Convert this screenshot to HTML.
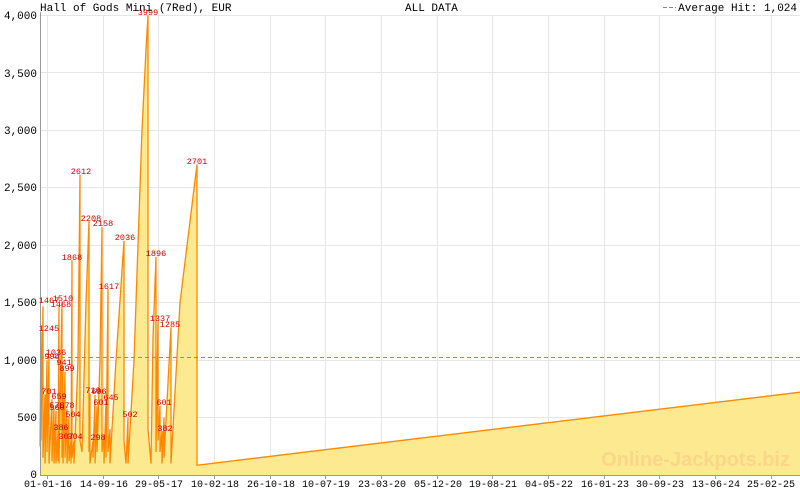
<!DOCTYPE html>
<html><head><meta charset="utf-8"><style>
html,body{margin:0;padding:0;background:#fff;width:800px;height:490px;overflow:hidden}
svg{display:block;font-family:"Liberation Mono",monospace}
</style></head><body>
<svg width="800" height="490" viewBox="0 0 800 490">
<rect width="800" height="490" fill="#fff"/>
<g stroke="#e6e6e6" stroke-width="1">
<line x1="40" y1="15.5" x2="800" y2="15.5"/><line x1="40" y1="72.5" x2="800" y2="72.5"/>
<line x1="40" y1="130.5" x2="800" y2="130.5"/><line x1="40" y1="187.5" x2="800" y2="187.5"/>
<line x1="40" y1="245.5" x2="800" y2="245.5"/><line x1="40" y1="302.5" x2="800" y2="302.5"/>
<line x1="40" y1="360.5" x2="800" y2="360.5"/><line x1="40" y1="417.5" x2="800" y2="417.5"/>
<line x1="47.5" y1="15" x2="47.5" y2="475"/><line x1="103.5" y1="15" x2="103.5" y2="475"/>
<line x1="158.5" y1="15" x2="158.5" y2="475"/><line x1="214.5" y1="15" x2="214.5" y2="475"/>
<line x1="270.5" y1="15" x2="270.5" y2="475"/><line x1="325.5" y1="15" x2="325.5" y2="475"/>
<line x1="381.5" y1="15" x2="381.5" y2="475"/><line x1="437.5" y1="15" x2="437.5" y2="475"/>
<line x1="492.5" y1="15" x2="492.5" y2="475"/><line x1="548.5" y1="15" x2="548.5" y2="475"/>
<line x1="604.5" y1="15" x2="604.5" y2="475"/><line x1="659.5" y1="15" x2="659.5" y2="475"/>
<line x1="715.5" y1="15" x2="715.5" y2="475"/><line x1="771.5" y1="15" x2="771.5" y2="475"/>
</g>
<g transform="translate(0,475) scale(1,-0.115)">
<polygon fill="#fde98f" points="40,0 40,250 41,1245 41,300 43,1467 43,150 45,701 45,100 47,998 47,200 49,1036 49,100 52,659 52,120 54,578 54,100 56,560 56,100 58,386 58,120 59,1468 59,100 62,1510 62,150 63,941 63,100 65,899 65,150 67,578 67,100 69,504 69,120 71,304 71,100 72,1868 72,150 74,300 74,100 78,1000 80,2612 80,300 82,200 86,1500 89,2208 89,200 90,710 90,100 93,298 93,150 95,696 95,100 97,601 97,200 100,1000 102,2158 102,200 104,350 104,100 106,645 106,150 108,1617 108,200 110,400 110,100 116,1000 124,2036 124,300 126,100 128,502 128,100 134,1000 138,2000 142,3000 146,3700 148,3999 148,400 151,100 153,1200 156,1896 156,200 158,1337 158,300 160,601 160,200 162,382 162,100 164,500 164,150 168,800 171,1285 171,100 180,1500 197,2701 197,85 800,720 800,0"/>
<polyline fill="none" stroke="#ff8800" stroke-width="1.3" vector-effect="non-scaling-stroke" points="40,250 41,1245 41,300 43,1467 43,150 45,701 45,100 47,998 47,200 49,1036 49,100 52,659 52,120 54,578 54,100 56,560 56,100 58,386 58,120 59,1468 59,100 62,1510 62,150 63,941 63,100 65,899 65,150 67,578 67,100 69,504 69,120 71,304 71,100 72,1868 72,150 74,300 74,100 78,1000 80,2612 80,300 82,200 86,1500 89,2208 89,200 90,710 90,100 93,298 93,150 95,696 95,100 97,601 97,200 100,1000 102,2158 102,200 104,350 104,100 106,645 106,150 108,1617 108,200 110,400 110,100 116,1000 124,2036 124,300 126,100 128,502 128,100 134,1000 138,2000 142,3000 146,3700 148,3999 148,400 151,100 153,1200 156,1896 156,200 158,1337 158,300 160,601 160,200 162,382 162,100 164,500 164,150 168,800 171,1285 171,100 180,1500 197,2701 197,85 800,720"/>
</g>
<line x1="40" y1="357.5" x2="800" y2="357.5" stroke="#5a9cc8" stroke-dasharray="4,3" stroke-width="1"/>
<text x="790" y="466" text-anchor="end" font-family="Liberation Sans,sans-serif" font-weight="bold" font-size="20" fill="#fad689">Online-Jackpots.biz</text>
<line x1="40.5" y1="12" x2="40.5" y2="476" stroke="#999"/>
<line x1="40" y1="475.5" x2="800" y2="475.5" stroke="#999"/>
<g stroke="#999"><line x1="47.5" y1="475" x2="47.5" y2="479"/><line x1="103.5" y1="475" x2="103.5" y2="479"/><line x1="158.5" y1="475" x2="158.5" y2="479"/><line x1="214.5" y1="475" x2="214.5" y2="479"/><line x1="270.5" y1="475" x2="270.5" y2="479"/><line x1="325.5" y1="475" x2="325.5" y2="479"/><line x1="381.5" y1="475" x2="381.5" y2="479"/><line x1="437.5" y1="475" x2="437.5" y2="479"/><line x1="492.5" y1="475" x2="492.5" y2="479"/><line x1="548.5" y1="475" x2="548.5" y2="479"/><line x1="604.5" y1="475" x2="604.5" y2="479"/><line x1="659.5" y1="475" x2="659.5" y2="479"/><line x1="715.5" y1="475" x2="715.5" y2="479"/><line x1="771.5" y1="475" x2="771.5" y2="479"/></g>
<g font-size="11" fill="#000" text-anchor="end">
<text x="37" y="19">4,000</text><text x="37" y="77">3,500</text><text x="37" y="134">3,000</text><text x="37" y="191">2,500</text><text x="37" y="249">2,000</text><text x="37" y="306">1,500</text><text x="37" y="364">1,000</text><text x="37" y="421">500</text><text x="37" y="478">0</text>
</g>
<g font-size="10" fill="#000" text-anchor="middle">
<text x="48" y="487">01-01-16</text><text x="104" y="487">14-09-16</text><text x="159" y="487">29-05-17</text><text x="215" y="487">10-02-18</text><text x="271" y="487">26-10-18</text><text x="326" y="487">10-07-19</text><text x="382" y="487">23-03-20</text><text x="438" y="487">05-12-20</text><text x="493" y="487">19-08-21</text><text x="549" y="487">04-05-22</text><text x="605" y="487">16-01-23</text><text x="660" y="487">30-09-23</text><text x="716" y="487">13-06-24</text><text x="771" y="487">25-02-25</text>
</g>
<g font-size="11" fill="#000">
<text x="40" y="11">Hall of Gods Mini (7Red), EUR</text>
<text x="405" y="11">ALL DATA</text>
<text x="797" y="11" text-anchor="end">Average Hit: 1,024</text>
</g>
<line x1="663" y1="7.5" x2="676" y2="7.5" stroke="#888" stroke-dasharray="4,2"/>
<g font-size="8.5" fill="#cc0000" text-anchor="middle">
<text x="148" y="15">3999</text><text x="197" y="164">2701</text><text x="81" y="174">2612</text><text x="91" y="221">2208</text><text x="103" y="226">2158</text><text x="125" y="240">2036</text><text x="156" y="256">1896</text><text x="72" y="260">1868</text><text x="109" y="289">1617</text><text x="63" y="301">1510</text><text x="49" y="303">1467</text><text x="61" y="307">1468</text><text x="160" y="321">1337</text><text x="170" y="327">1285</text><text x="49" y="331">1245</text><text x="56" y="355">1036</text><text x="52" y="359">998</text><text x="64" y="365">941</text><text x="67" y="371">899</text><text x="93" y="393">710</text><text x="99" y="394">696</text><text x="49" y="394">701</text><text x="59" y="399">659</text><text x="111" y="400">645</text><text x="101" y="405">601</text><text x="164" y="405">601</text><text x="57" y="408">578</text><text x="67" y="408">578</text><text x="57" y="410">560</text><text x="73" y="417">504</text><text x="130" y="417">502</text><text x="61" y="430">386</text><text x="165" y="431">382</text><text x="66" y="439">307</text><text x="75" y="439">304</text><text x="98" y="440">298</text>
</g>
</svg>
</body></html>
